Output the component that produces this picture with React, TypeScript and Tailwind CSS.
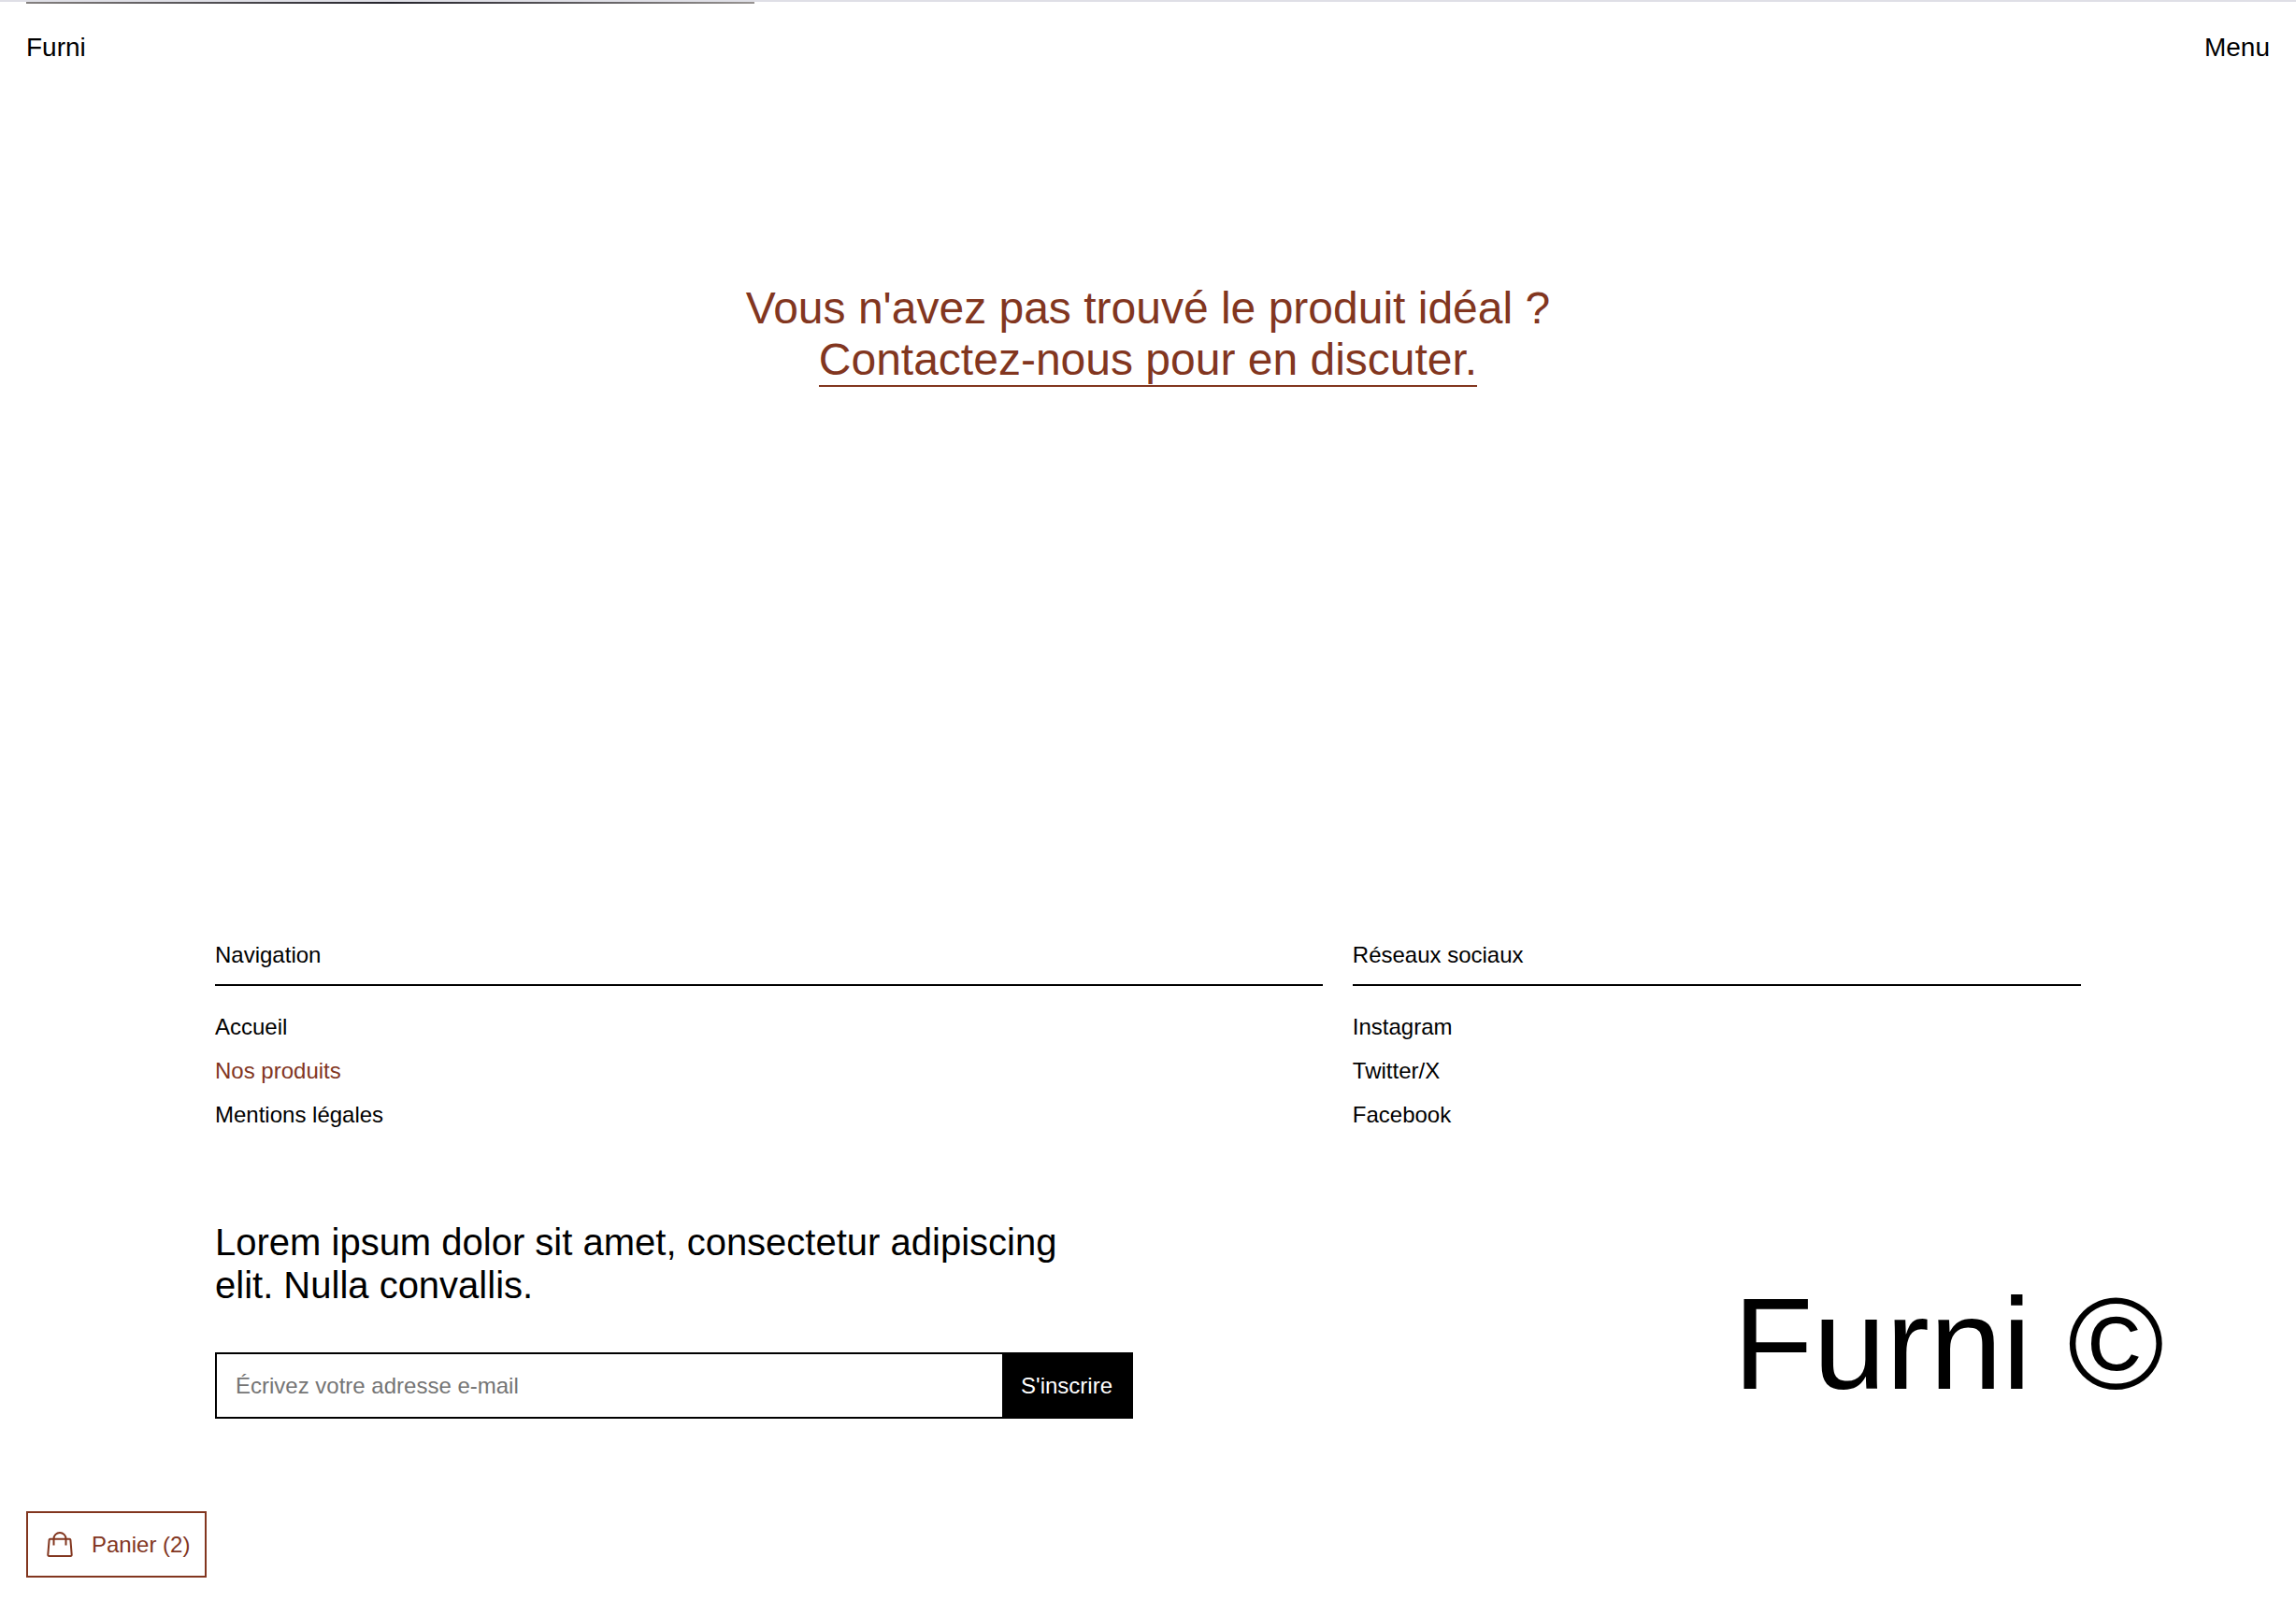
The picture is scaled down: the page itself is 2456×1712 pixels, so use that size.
const navigation = [
  { label: "Accueil", active: false },
  { label: "Nos produits", active: true },
  { label: "Mentions légales", active: false },
];

const social = [
  { label: "Instagram", active: false },
  { label: "Twitter/X", active: false },
  { label: "Facebook", active: false },
];

type LinkItem = { label: string; active: boolean };

function LinkColumn({ title, items, span }: { title: string; items: LinkItem[]; span: string }) {
  return (
    <nav aria-label={title} className={span}>
      <h2 className="border-b-2 border-black pb-[17px] text-2xl leading-7">{title}</h2>
      <ul className="mt-[30px] flex flex-col gap-[19px]">
        {items.map((item) => (
          <li key={item.label} className="text-2xl leading-7">
            <a href="#" className={item.active ? "text-[#82361f]" : "text-black"}>
              {item.label}
            </a>
          </li>
        ))}
      </ul>
    </nav>
  );
}

function BagIcon() {
  return (
    <svg
      viewBox="0 0 28 28"
      className="size-7"
      fill="none"
      stroke="currentColor"
      strokeWidth="2"
      strokeLinejoin="round"
      aria-hidden="true"
    >
      <path d="M3.600 7.800h20.800a1 1 0 0 1 1 .9l1.300 16a1.200 1.200 0 0 1-1.200 1.300H2.500a1.200 1.200 0 0 1-1.200-1.300l1.300-16a1 1 0 0 1 1-.9Z" />
      <path d="M7.500 14.500V7.500a6.500 6.500 0 0 1 13 0v7" />
    </svg>
  );
}

export default function App() {
  return (
    <div className="min-h-screen bg-white font-['Liberation_Sans',Arial,sans-serif] text-black">
      <div className="h-0.5 bg-[#dfdfe6]" />
      <div className="px-7">
        <div className="h-0.5 w-[779px] bg-linear-to-r from-[#858180] via-[#25242c] to-[#989492]" />
      </div>

      <header className="flex items-center justify-between px-7 pt-[31px] text-[28px] leading-8">
        <a href="#">Furni</a>
        <button type="button">Menu</button>
      </header>

      <main className="pt-[235px] text-center text-5xl leading-[55px] text-[#82361f]">
        <p>Vous n'avez pas trouvé le produit idéal ?</p>
        <a href="#" className="inline-block border-b-2 border-[#82361f]">
          Contactez-nous pour en discuter.
        </a>
      </main>

      <footer className="pt-[594px]">
        <div className="grid grid-cols-5 gap-8 px-[230px]">
          <LinkColumn title="Navigation" items={navigation} span="col-span-3" />
          <LinkColumn title="Réseaux sociaux" items={social} span="col-span-2" />
        </div>

        <div className="flex items-end justify-between pt-[99px] pr-[141px] pl-[230px]">
          <div className="w-1/2 max-w-[982px]">
            <p className="pr-12 text-[40px] leading-[46px]">
              Lorem ipsum dolor sit amet, consectetur adipiscing elit. Nulla convallis.
            </p>
            <form className="mt-[49px] flex h-[71px] border-2 border-black" onSubmit={(e) => e.preventDefault()}>
              <input
                type="email"
                aria-label="Écrivez votre adresse e-mail"
                placeholder="Écrivez votre adresse e-mail"
                className="min-w-0 flex-1 px-5 text-2xl outline-none placeholder:text-[#757575]"
              />
              <button type="submit" className="bg-black px-5 text-2xl leading-7 text-white">
                S'inscrire
              </button>
            </form>
          </div>
          <p className="text-[140px] leading-40">Furni ©</p>
        </div>
      </footer>

      <button
        type="button"
        className="fixed bottom-6 left-7 flex h-[71px] items-center gap-5 border-2 border-[#82361f] bg-white pr-4 pl-5 text-2xl leading-7 text-[#82361f]"
      >
        <BagIcon />
        Panier (2)
      </button>
    </div>
  );
}
